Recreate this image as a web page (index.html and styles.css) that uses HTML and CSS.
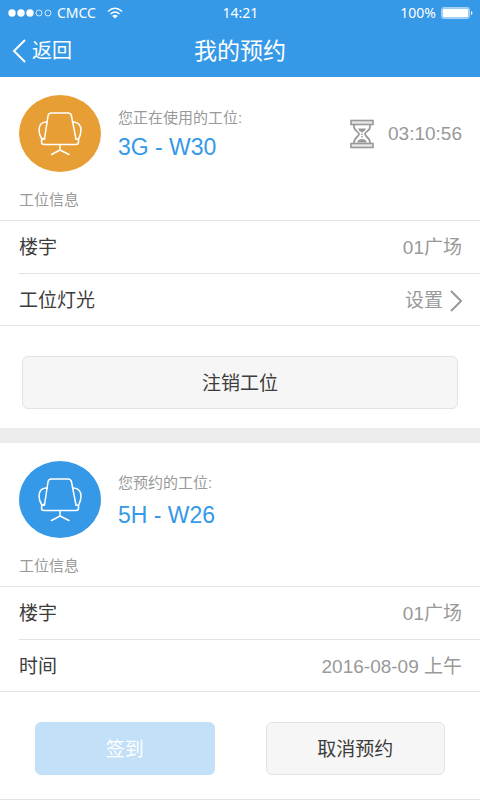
FILE: index.html
```html
<!DOCTYPE html>
<html lang="zh-CN">
<head>
<meta charset="utf-8">
<meta name="viewport" content="width=device-width, initial-scale=1">
<title>我的预约</title>
<link rel="stylesheet" href="styles.css">
</head>
<body>
<svg class="defs" aria-hidden="true">
  <symbol id="chair" viewBox="0 0 44 44">
    <path d="M6.500 27L10 4Q10.500 1 13.500 1H30Q33 1 33.500 4L38 27"/>
    <path d="M6.500 26Q3.500 27 3.500 29V30Q3.500 32.500 6 32.500H38Q40.500 32.500 40.500 30V27.500"/>
    <path d="M9 10C3 9.500 1 14 1 18Q1 22.500 4 27.500L6.500 27"/>
    <path d="M34.500 10C40.500 9.500 43 14 43 18Q43 22.500 40.500 27.500L38 27"/>
    <path d="M22 33v5M13.500 42.500L22 38l9 4.500"/>
  </symbol>
</svg>
<header class="top">
  <div class="status">
    <div class="status-left">
      <svg class="signal" viewBox="0 0 44 8" width="44" height="8" aria-hidden="true">
        <g fill="#fff"><circle cx="4" cy="4" r="3.700"/><circle cx="13" cy="4" r="3.700"/><circle cx="22" cy="4" r="3.700"/></g>
        <g fill="none" stroke="#d3e8fa"><circle cx="31" cy="4" r="3"/><circle cx="40" cy="4" r="3"/></g>
      </svg>
      <span>CMCC</span>
      <svg class="wifi" viewBox="0 0 16 12" width="16" height="12" aria-hidden="true">
        <path d="M1 4.500Q8-2 15 4.500M3.500 7Q8 3 12.500 7" fill="none" stroke="#fff" stroke-width="1.500"/>
        <path d="M5.200 9Q8 6.700 10.800 9L8 11.500Z" fill="#fff"/>
      </svg>
    </div>
    <span>14:21</span>
    <div class="status-right">
      <span>100%</span>
      <svg viewBox="0 0 32 12" width="32" height="12" aria-hidden="true">
        <rect x=".5" y=".5" width="28" height="11" rx="2" fill="none" stroke="#a9d3f6"/>
        <rect x="1.500" y="1.500" width="26" height="9" rx="1" fill="#fff"/>
        <path d="M30 4q3 2 0 4z" fill="#fff"/>
      </svg>
    </div>
  </div>
  <nav class="nav">
    <a class="back" href="#">
      <svg viewBox="0 0 14 24" width="14" height="24" aria-hidden="true"><path d="M13 1L2 12l11 11" fill="none" stroke="#fff" stroke-width="2"/></svg>
      返回
    </a>
    <h1>我的预约</h1>
  </nav>
</header>
<main>
  <section class="card">
    <div class="seat">
      <div class="avatar avatar-active"><svg class="chair" aria-hidden="true"><use href="#chair"/></svg></div>
      <div class="seat-text">
        <p class="caption">您正在使用的工位:</p>
        <p class="seat-code">3G - W30</p>
      </div>
      <div class="timer">
        <svg viewBox="0 0 24 30" width="24" height="30" aria-hidden="true">
          <g fill="#e6e6e6" stroke="#999" stroke-width="1.600">
            <rect x="1" y="1.500" width="22" height="4"/><rect x="1" y="24.500" width="22" height="4"/>
          </g>
          <g fill="none" stroke="#999" stroke-width="1.800">
            <path d="M4 6v2c0 4 5 4.500 5 7s-5 4-5 8v1M20 6v2c0 4-5 4.500-5 7s5 4 5 8v1"/>
          </g>
          <path d="M8 9.500h8q-1 3-4 4-3-1-4-4zM7 23.500q1-3.500 5-3.500t5 3.500zM11.300 14.500h1.400v1.500h-1.400zM11.300 17h1.400v1.500h-1.400z" fill="#999"/>
        </svg>
        <time>03:10:56</time>
      </div>
    </div>
    <h2 class="caption info">工位信息</h2>
    <dl class="rows">
      <div class="row"><dt>楼宇</dt><dd>01广场</dd></div>
      <div class="row"><dt>工位灯光</dt><dd><a class="setting" href="#">设置
        <svg viewBox="0 0 12 22" width="12" height="22" aria-hidden="true"><path d="M1 1l10 10L1 21" fill="none" stroke="#999" stroke-width="2"/></svg></a></dd></div>
    </dl>
    <div class="actions"><button class="btn" type="button">注销工位</button></div>
  </section>
  <section class="card">
    <div class="seat">
      <div class="avatar"><svg class="chair" aria-hidden="true"><use href="#chair"/></svg></div>
      <div class="seat-text seat-text-roomy">
        <p class="caption">您预约的工位:</p>
        <p class="seat-code">5H - W26</p>
      </div>
    </div>
    <h2 class="caption info">工位信息</h2>
    <dl class="rows">
      <div class="row"><dt>楼宇</dt><dd>01广场</dd></div>
      <div class="row"><dt>时间</dt><dd>2016-08-09 上午</dd></div>
    </dl>
    <div class="actions actions-pair">
      <button class="btn btn-primary" type="button" disabled>签到</button>
      <button class="btn" type="button">取消预约</button>
    </div>
  </section>
</main>
</body>
</html>
```
FILE: styles.css
```css
* {
  box-sizing: border-box;
}

body {
  margin: 0;
  background: #fff;
  color: #3c3c3c;
  font: 19px/24px "Liberation Sans", "Noto Sans CJK SC", sans-serif;
}

h1, h2, p, dl, dd {
  margin: 0;
  font-weight: 400;
}

a {
  color: inherit;
  text-decoration: none;
}

svg {
  flex: none;
}

.defs {
  display: none;
}

.top {
  background: #3599e8;
  color: #fff;
}

.status {
  display: grid;
  grid-template-columns: 1fr auto 1fr;
  align-items: center;
  height: 25px;
  padding: 0 7px 0 8px;
  font: 14px/20px "Noto Sans", sans-serif;
}

.status-left,
.status-right {
  display: flex;
  align-items: center;
  gap: 5px;
}

.status-right {
  justify-content: flex-end;
}

.wifi {
  margin-left: 6px;
}

.nav {
  display: grid;
  grid-template-columns: 1fr auto 1fr;
  align-items: center;
  height: 52px;
  padding: 0 12px;
}

.nav h1 {
  font-size: 23px;
}

.back {
  display: flex;
  align-items: center;
  gap: 6px;
  font-size: 20px;
}

.card + .card {
  border-top: 15px solid #ededed;
}

.seat {
  display: flex;
  align-items: center;
  padding: 18px 18px 0 19px;
}

.avatar {
  display: grid;
  place-items: center;
  width: 82px;
  height: 77px;
  border-radius: 50%;
  background: #3599e8;
}

.avatar-active {
  background: #e79f35;
}

.chair {
  width: 44px;
  height: 44px;
  fill: none;
  stroke: #fff;
  stroke-width: 1.5;
  stroke-linecap: round;
  stroke-linejoin: round;
}

.seat-text {
  display: grid;
  gap: 5px;
  margin-left: 17px;
  padding-bottom: 2px;
}

.seat-text-roomy {
  gap: 8px;
}

.caption {
  color: #999;
  font-size: 15px;
}

.seat-code {
  color: #3599e8;
  font-size: 23px;
}

.timer {
  display: flex;
  align-items: center;
  gap: 14px;
  margin-left: auto;
  color: #999;
}

.info {
  padding: 16px 19px 8px;
}

.rows {
  border: solid #e2e2e2;
  border-width: 1px 0;
}

.row {
  display: flex;
  align-items: center;
  justify-content: space-between;
  height: 52px;
  margin-left: 19px;
  padding: 2px 18px 0 0;
}

.row + .row {
  border-top: 1px solid #e2e2e2;
}

.row dd {
  color: #999;
}

.setting {
  display: flex;
  align-items: center;
  gap: 7px;
}

.actions {
  display: flex;
  padding: 30px 22px 19px;
}

.actions-pair {
  gap: 51px;
  padding: 30px 35px 24px;
  border-bottom: 1px solid #e2e2e2;
}

.btn {
  flex: 1;
  height: 53px;
  padding: 2px 6px 0;
  border: 1px solid #e2e2e2;
  border-radius: 6px;
  background: #f6f6f6;
  color: #3c3c3c;
  font: inherit;
}

.btn-primary {
  border-color: #c2e0f8;
  background: #c2e0f8;
  color: #fff;
}
```
